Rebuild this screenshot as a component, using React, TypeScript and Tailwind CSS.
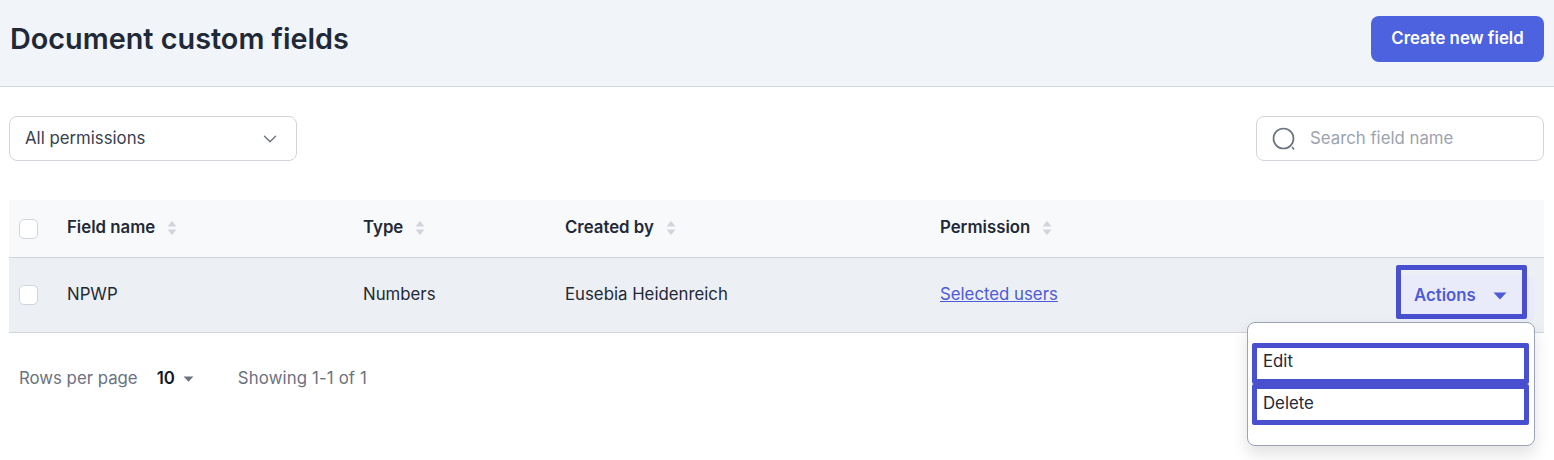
import { ChevronDown } from 'lucide-react';

function SortIcon() {
  return (
    <svg width="10" height="16" viewBox="0 0 10 16" className="ml-[12px] shrink-0 fill-[#d1d5db]">
      <path d="M5 1 L9.5 6.5 H0.5 Z" />
      <path d="M5 15 L9.5 9.5 H0.5 Z" />
    </svg>
  );
}

function Checkbox() {
  return <span className="h-[20px] w-[19px] rounded-[5px] border border-[#d1d5db] bg-white" />;
}

function Caret({ className }: { className: string }) {
  return (
    <svg viewBox="0 0 14 8" className={className}>
      <path d="M0.5 0.5 H13.5 L7 7.5 Z" />
    </svg>
  );
}

function HeaderCell({ label, className }: { label: string; className: string }) {
  return (
    <div className={`flex items-center text-[16.8px] font-semibold text-[#1f2937] ${className}`}>
      <span className="-translate-y-[1px]">{label}</span>
      <span className="-translate-y-[1px]"><SortIcon /></span>
    </div>
  );
}

export default function App() {
  return (
    <div className="h-[460px] w-[1554px] overflow-hidden bg-white font-['Inter',sans-serif] text-[#1f2937]">
      <header className="flex h-[87px] items-start justify-between border-b border-[#d1d5db] bg-[#f1f4f9] pl-[10px] pr-[10px] pt-[16px]">
        <h1 className="mt-[3px] text-[28.8px] font-semibold leading-[40px] text-[#1f2937]">Document custom fields</h1>
        <button className="h-[46px] w-[173px] rounded-[8px] bg-[#4d62df] text-[16.8px] font-semibold text-white">
          Create new field
        </button>
      </header>

      <div className="mt-[29px] flex items-center justify-between pl-[9px] pr-[10px]">
        <div className="flex h-[45px] w-[288px] items-center justify-between rounded-[8px] border border-[#d1d5db] bg-white pl-[15px] pr-[15px] text-[16.8px] text-[#374151]">
          All permissions
          <ChevronDown size={22} strokeWidth={1.5} className="text-[#6b7280]" />
        </div>
        <div className="flex h-[45px] w-[288px] items-center rounded-[8px] border border-[#d1d5db] bg-white pl-[15px] text-[16.8px] text-[#9ca3af]">
          <svg width="24" height="24" viewBox="0 0 24 24" fill="none" className="stroke-[#6b7280]">
            <circle cx="11.5" cy="11.5" r="10" strokeWidth="1.7" />
            <path d="M20 20 L22 22.5" strokeWidth="1.5" />
          </svg>
          <span className="ml-[14px]">Search field name</span>
        </div>
      </div>

      <div className="relative ml-[9px] mr-[10px] mt-[39px]">
        <div className="flex h-[58px] items-center border-b border-[#d1d5db] bg-[#f8f9fb] pl-[10px]">
          <Checkbox />
          <HeaderCell label="Field name" className="ml-[29px] w-[296px]" />
          <HeaderCell label="Type" className="w-[201px]" />
          <HeaderCell label="Created by" className="w-[376px] translate-x-[1px]" />
          <HeaderCell label="Permission" className="w-[200px]" />
        </div>
        <div className="flex h-[75px] items-center border-b border-[#d1d5db] bg-[#eceff3] pb-[1px] pl-[10px] text-[16.8px] text-[#1f2937]">
          <Checkbox />
          <div className="ml-[29px] w-[296px]">NPWP</div>
          <div className="w-[201px]">Numbers</div>
          <div className="w-[376px] translate-x-[1px]">Eusebia Heidenreich</div>
          <a href="#" className="text-[#4d5bd6] underline">Selected users</a>
          <button className="ml-auto mr-[9px] flex h-[46px] w-[139px] translate-y-[3px] items-center rounded-[8px] bg-[#e9ebfa] pb-[4px] pl-[18px] text-[16.8px] font-semibold text-[#4d5bd6]">
            Actions
            <Caret className="ml-[17px] h-[8px] w-[14px] fill-[#4d5bd6]" />
          </button>
        </div>

        {/* annotation box over the actions button */}
        <div className="absolute left-[1387px] top-[65px] h-[54px] w-[131px] rounded-[2px] border-[5px] border-[#4850d0]" />

        {/* open actions menu */}
        <div className="absolute left-[1238px] top-[122px] h-[124px] w-[288px] rounded-[8px] border border-[#9ca3b8] bg-white pl-[4px] pr-[5px] pt-[20px] text-[16.8px] text-[#1f2937] shadow-[0_8px_16px_rgba(0,0,0,0.12)]">
          <div className="flex h-[41px] items-center rounded-[2px] border-[5px] border-[#4850d0] pb-[3px] pl-[6px]">Edit</div>
          <div className="flex h-[41px] items-center rounded-[2px] border-[5px] border-[#4850d0] pb-[1px] pl-[6px]">Delete</div>
        </div>
      </div>

      <div className="ml-[19px] mt-[33px] flex items-center text-[16.8px] text-[#6b7280]">
        Rows per page
        <span className="ml-[19px] font-semibold text-[#111827]">10</span>
        <Caret className="ml-[8px] h-[6px] w-[11px] fill-[#6b7280]" />
        <span className="ml-[44px] tracking-[0.13px]">Showing 1-1 of 1</span>
      </div>
    </div>
  );
}
